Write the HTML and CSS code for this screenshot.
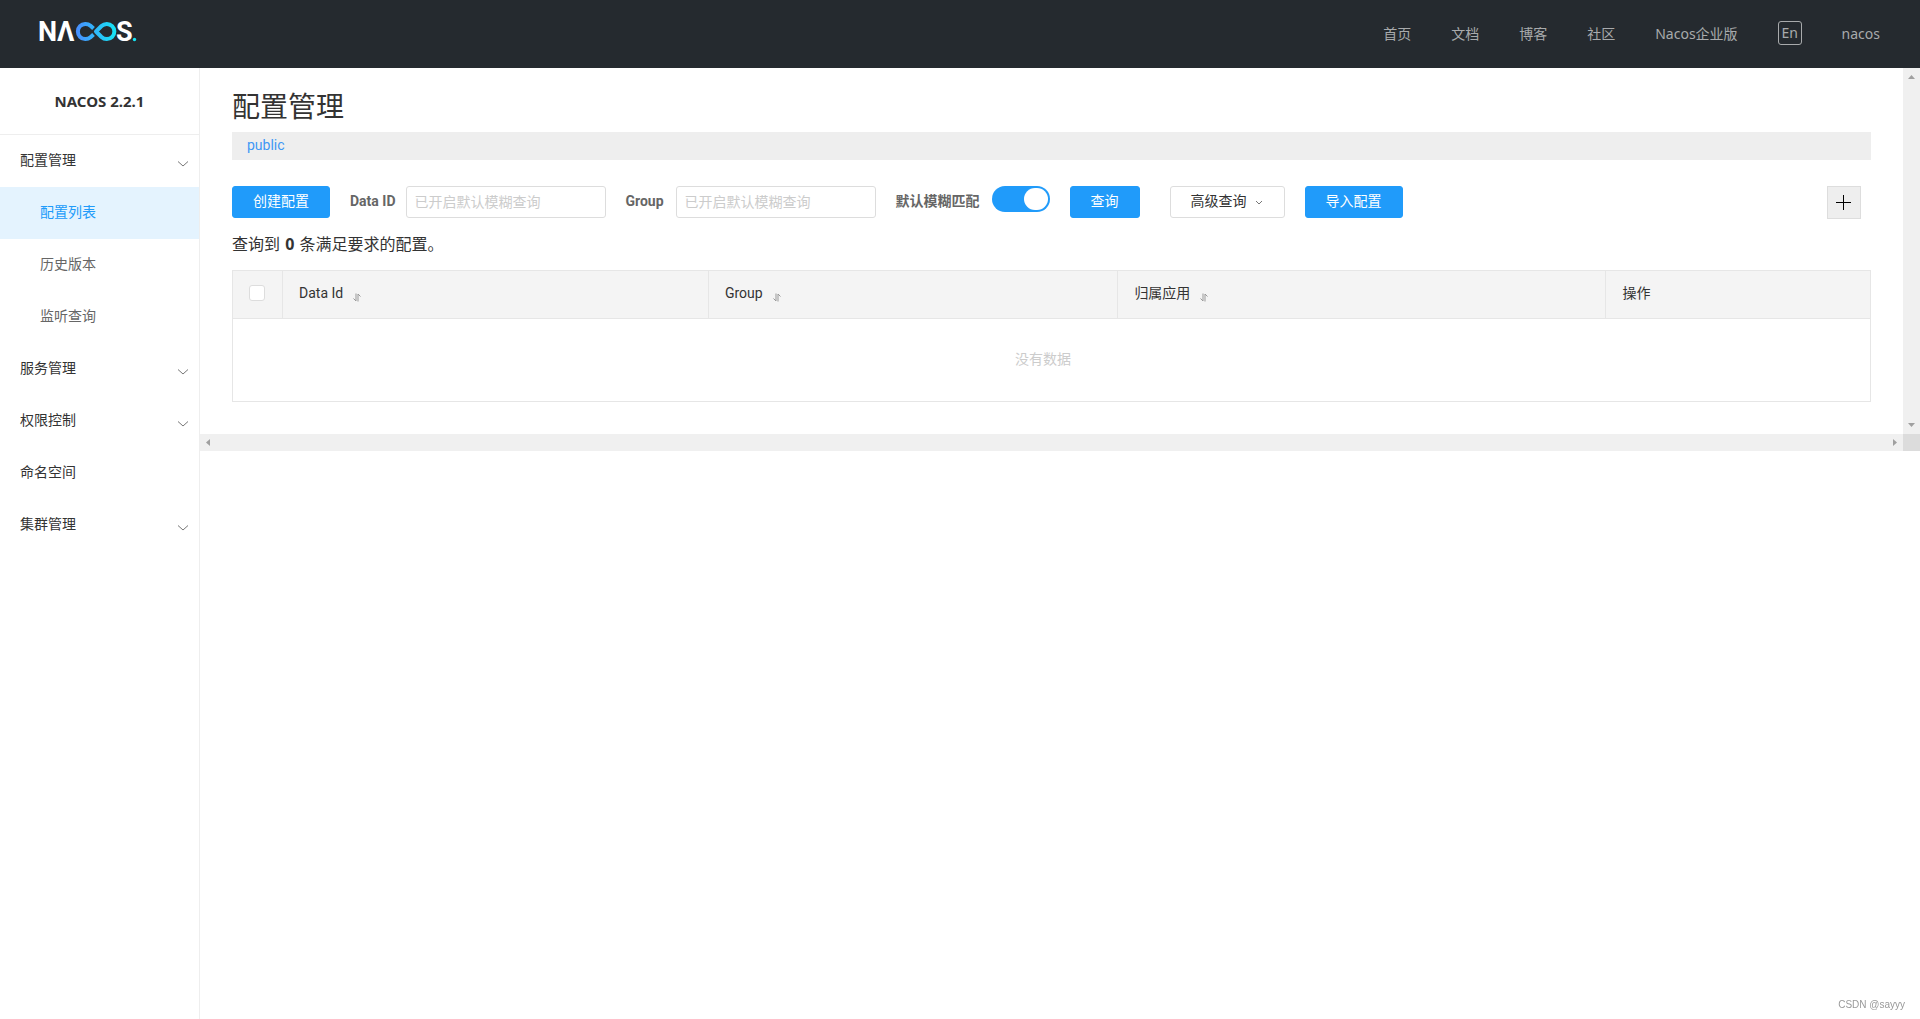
FILE: index.html
```html
<!DOCTYPE html>
<html lang="zh-CN">
<head>
<meta charset="utf-8">
<title>Nacos</title>
<link rel="stylesheet" href="styles.css">
</head>
<body>
<header class="topbar">
  <a class="logo" href="#" aria-label="NACOS">
    <svg width="108" height="40" viewBox="-4 -8 108 40">
      <defs>
        <linearGradient id="loop" gradientUnits="userSpaceOnUse" x1="36" y1="0" x2="76" y2="0">
          <stop offset="0" stop-color="#4a8dff"/>
          <stop offset="1" stop-color="#14e5f5"/>
        </linearGradient>
      </defs>
      <g class="logo-letters">
        <text x="-2" y="21">N</text>
        <text x="17" y="21">Λ</text>
        <text x="76" y="21">S</text>
      </g>
      <g fill="none" stroke="url(#loop)" stroke-width="4">
        <path d="M53.500 8.500 L50.500 5.800 A7.600 7.600 0 1 0 50.500 17.200 L53.500 14.500"/>
        <path d="M56 11.500 L61.500 6 A7.600 7.600 0 1 1 61.500 17 Z" stroke-linejoin="round"/>
      </g>
      <circle cx="94.500" cy="19.500" r="1.700" fill="#14e5f5"/>
    </svg>
  </a>
  <nav class="topnav">
    <a href="#">首页</a>
    <a href="#">文档</a>
    <a href="#">博客</a>
    <a href="#">社区</a>
    <a href="#">Nacos企业版</a>
    <button class="lang" type="button">En</button>
    <a href="#">nacos</a>
  </nav>
</header>
<div class="shell">
  <aside class="sidebar">
    <h1 class="version">NACOS 2.2.1</h1>
    <nav class="menu">
      <a class="group" href="#">配置管理<svg class="chevron" viewBox="0 0 12 6"><path d="M1 0.500 L6 5 L11 0.500"/></svg></a>
      <a class="child active" href="#">配置列表</a>
      <a class="child" href="#">历史版本</a>
      <a class="child" href="#">监听查询</a>
      <a class="group" href="#">服务管理<svg class="chevron" viewBox="0 0 12 6"><path d="M1 0.500 L6 5 L11 0.500"/></svg></a>
      <a class="group" href="#">权限控制<svg class="chevron" viewBox="0 0 12 6"><path d="M1 0.500 L6 5 L11 0.500"/></svg></a>
      <a class="group" href="#">命名空间</a>
      <a class="group" href="#">集群管理<svg class="chevron" viewBox="0 0 12 6"><path d="M1 0.500 L6 5 L11 0.500"/></svg></a>
    </nav>
  </aside>
  <div class="viewport">
    <main class="content">
      <h2 class="title">配置管理</h2>
      <div class="namespaces"><a href="#">public</a></div>
      <form class="toolbar">
        <button class="btn primary" type="button">创建配置</button>
        <div class="field field-id">
          <label for="data-id">Data ID</label>
          <input class="text" id="data-id" type="text" placeholder="已开启默认模糊查询">
        </div>
        <div class="field">
          <label for="group">Group</label>
          <input class="text" id="group" type="text" placeholder="已开启默认模糊查询">
        </div>
        <div class="field">
          <label for="fuzzy">默认模糊匹配</label>
          <input class="switch" id="fuzzy" type="checkbox" role="switch" checked>
        </div>
        <button class="btn primary query" type="button">查询</button>
        <button class="btn" type="button">高级查询<svg class="caret" viewBox="0 0 8 5"><path d="M1 1 L4 4 L7 1"/></svg></button>
        <button class="btn primary" type="button">导入配置</button>
        <button class="add" type="button" aria-label="新建"><svg width="16" height="16" viewBox="0 0 16 16"><path d="M0 7.500 H15 M7.500 0 V15"/></svg></button>
      </form>
      <p class="summary">查询到 <strong>0</strong> 条满足要求的配置。</p>
      <table class="configs">
        <colgroup><col class="c-check"><col class="c-id"><col class="c-group"><col class="c-app"><col></colgroup>
        <thead>
          <tr>
            <th class="check"><input type="checkbox" aria-label="全选"></th>
            <th>Data Id<svg class="sort" viewBox="0 0 8 9"><path d="M3 0.500 V8 L0.500 5.500 M5 8.500 V1 L7.500 3.500"/></svg></th>
            <th>Group<svg class="sort" viewBox="0 0 8 9"><path d="M3 0.500 V8 L0.500 5.500 M5 8.500 V1 L7.500 3.500"/></svg></th>
            <th>归属应用<svg class="sort" viewBox="0 0 8 9"><path d="M3 0.500 V8 L0.500 5.500 M5 8.500 V1 L7.500 3.500"/></svg></th>
            <th>操作</th>
          </tr>
        </thead>
        <tbody>
          <tr><td class="empty" colspan="5">没有数据</td></tr>
        </tbody>
      </table>
    </main>
    <div class="bar vertical" aria-hidden="true">
      <svg width="7" height="4" viewBox="0 0 7 4"><path d="M0 4 L3.500 0 L7 4 Z"/></svg>
      <svg width="7" height="4" viewBox="0 0 7 4"><path d="M0 0 L3.500 4 L7 0 Z"/></svg>
    </div>
    <div class="bar" aria-hidden="true">
      <svg width="4" height="7" viewBox="0 0 4 7"><path d="M4 0 L0 3.500 L4 7 Z"/></svg>
      <svg width="4" height="7" viewBox="0 0 4 7"><path d="M0 0 L4 3.500 L0 7 Z"/></svg>
    </div>
    <div class="corner" aria-hidden="true"></div>
  </div>
</div>
<div class="credit">CSDN @sayyy</div>
</body>
</html>
```
FILE: styles.css
```css
* { box-sizing: border-box; }

body {
  margin: 0;
  min-height: 100vh;
  display: flex;
  flex-direction: column;
  background: #fff;
  color: #333;
  font: 14px/20px Roboto, "Noto Sans CJK SC", sans-serif;
}

a { color: inherit; text-decoration: none; }
button, input { font: inherit; }

.topbar {
  height: 68px;
  padding: 0 40px 0 36px;
  display: flex;
  align-items: center;
  justify-content: space-between;
  background: #252a2f;
}

.logo { display: flex; padding-bottom: 4px; }
.logo svg { display: block; }
.logo-letters { fill: #fff; font: bold 27px Roboto, sans-serif; }

.topnav {
  display: flex;
  align-items: center;
  gap: 40px;
  color: #a8aaac;
  font: 14px/20px "Noto Sans", "Noto Sans CJK SC", sans-serif;
}

.lang {
  height: 24px;
  width: 24px;
  margin-bottom: 2px;
  padding: 0;
  border: 1px solid #a8aaac;
  border-radius: 3px;
  background: none;
  color: inherit;
}

.shell { flex: 1; display: flex; }

.sidebar { flex: none; width: 200px; border-right: 1px solid #eee; }

.version {
  margin: 0;
  height: 67px;
  border-bottom: 1px solid #eee;
  font: bold 15px/66px "Noto Sans", sans-serif;
  text-align: center;
}

.menu { display: flex; flex-direction: column; }

.menu a {
  height: 52px;
  padding: 0 10px 2px 20px;
  display: flex;
  align-items: center;
  justify-content: space-between;
}

.menu .child { padding-left: 40px; color: #666; }
.menu .active { background: #e4f3fe; color: #209bfa; }

.chevron { width: 12px; height: 6px; margin-top: 8px; }
.chevron, .caret, .sort { fill: none; stroke: #777; }

.viewport {
  flex: 1;
  min-width: 0;
  align-self: flex-start;
  display: grid;
  grid-template-columns: 1fr 17px;
  grid-template-rows: auto 17px;
}

.content { min-width: 0; padding: 16px 32px 32px; }

.title { margin: 0; font-size: 28px; line-height: 48px; font-weight: 400; }

.namespaces {
  padding: 3px 15px 5px;
  background: #eee;
  color: #3f98f5;
}
.namespaces a { display: block; line-height: 20px; }

.toolbar {
  margin-top: 26px;
  padding-right: 10px;
  display: flex;
  align-items: flex-start;
  gap: 20px;
}

.field { display: flex; gap: 12px; }
.field-id { gap: 10px; }
.field label { color: #666; font-weight: bold; line-height: 30px; white-space: nowrap; }

.text {
  width: 200px;
  height: 32px;
  padding: 0 8px;
  border: 1px solid #ddd;
  border-radius: 3px;
  color: #333;
}
.text::placeholder { color: #ccc; }

.switch {
  appearance: none;
  width: 58px;
  height: 26px;
  margin: 0;
  padding: 2px;
  border-radius: 13px;
  background: #ccc;
  display: flex;
}
.switch::before { content: ""; width: 24px; height: 22px; border-radius: 12px; background: #fff; }
.switch:checked { background: #209bfa; justify-content: flex-end; }

.btn {
  height: 32px;
  padding: 0 20px 2px;
  display: flex;
  align-items: center;
  border: 1px solid #ddd;
  border-radius: 3px;
  background: #fff;
  color: #333;
  white-space: nowrap;
}
.primary { border-color: #209bfa; background: #209bfa; color: #fff; }
.query { margin-right: 10px; }
.caret { width: 8px; height: 5px; margin: 3px 1px 0 8px; }

.add {
  width: 34px;
  height: 33px;
  margin-left: auto;
  padding: 0;
  display: flex;
  align-items: center;
  justify-content: center;
  border: 1px solid #ddd;
  background: #eee;
}
.add svg { fill: none; stroke: #000; }

.summary {
  margin: 13px 0 14px;
  font: 16px/24px "Noto Sans", "Noto Sans CJK SC", sans-serif;
}
.summary strong { margin: 0 1px; }

.configs {
  width: 100%;
  table-layout: fixed;
  border-collapse: collapse;
  border: 1px solid #e6e6e6;
}
.c-check { width: 50px; }
.c-id { width: 26%; }
.c-group { width: 25%; }
.c-app { width: 29.8%; }

.configs th {
  height: 48px;
  padding: 0 16px 4px;
  border: 1px solid #e6e6e6;
  background: #f4f4f4;
  font-weight: 400;
  text-align: left;
}
.configs .check { padding: 0 2px 6px 0; text-align: center; }
.check input {
  appearance: none;
  width: 16px;
  height: 16px;
  margin: 0;
  border: 1px solid #ddd;
  border-radius: 3px;
  background: #fff;
  vertical-align: middle;
}
.sort { width: 8px; height: 9px; margin-left: 10px; vertical-align: -4px; stroke: #999; }

.empty { height: 83px; padding: 0 17px 2px 0; color: #ccc; text-align: center; }

.bar {
  padding: 0 6px;
  display: flex;
  align-items: center;
  justify-content: space-between;
  background: #f0f0f0;
  fill: #a0a0a0;
}
.vertical { flex-direction: column; padding: 7px 0; }
.corner { background: #dcdcdc; }

.credit {
  position: fixed;
  right: 15px;
  bottom: 6px;
  color: #999;
  font: 10px/16px "Liberation Sans", sans-serif;
}
```
